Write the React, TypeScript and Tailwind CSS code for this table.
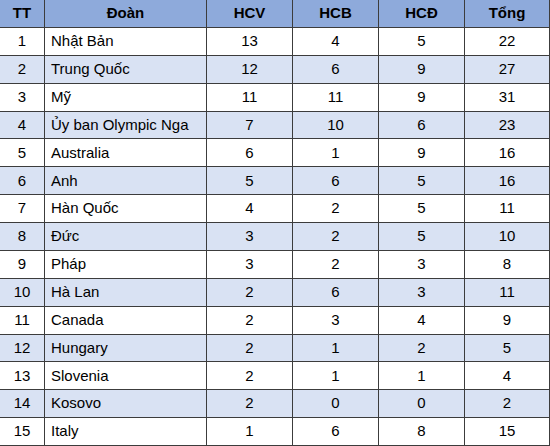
import React from "react";

const rows: [number, string, number, number, number, number][] = [
  [1, "Nhật Bản", 13, 4, 5, 22],
  [2, "Trung Quốc", 12, 6, 9, 27],
  [3, "Mỹ", 11, 11, 9, 31],
  [4, "Ủy ban Olympic Nga", 7, 10, 6, 23],
  [5, "Australia", 6, 1, 9, 16],
  [6, "Anh", 5, 6, 5, 16],
  [7, "Hàn Quốc", 4, 2, 5, 11],
  [8, "Đức", 3, 2, 5, 10],
  [9, "Pháp", 3, 2, 3, 8],
  [10, "Hà Lan", 2, 6, 3, 11],
  [11, "Canada", 2, 3, 4, 9],
  [12, "Hungary", 2, 1, 2, 5],
  [13, "Slovenia", 2, 1, 1, 4],
  [14, "Kosovo", 2, 0, 0, 2],
  [15, "Italy", 1, 6, 8, 15],
];

const headers = ["TT", "Đoàn", "HCV", "HCB", "HCĐ", "Tổng"];

export default function App() {
  return (
    <div
      className="w-[550px] h-[446px] bg-white text-black"
      style={{ fontFamily: '"Liberation Sans", Arial, sans-serif' }}
    >
      <div className="grid h-[446px] grid-cols-[45px_162px_86px_86px_86px_85px] grid-rows-[28px_repeat(15,1fr)] text-[15px]">
        {/* header */}
        {headers.map((h) => (
          <div
            key={h}
            className="flex items-center justify-center bg-[#8eaadb] font-bold border-r border-b border-[#3c3c3c]"
          >
            {h}
          </div>
        ))}

        {/* body */}
        {rows.map((r, i) => {
          const bg = i % 2 === 1 ? "bg-[#d9e2f3]" : "bg-white";
          return r.map((v, j) => (
            <div
              key={`${i}-${j}`}
              className={`flex items-center border-r border-b border-[#3c3c3c] ${bg} ${
                j === 1 ? "justify-start pl-[6px]" : "justify-center"
              }`}
            >
              {v}
            </div>
          ));
        })}
      </div>
    </div>
  );
}
